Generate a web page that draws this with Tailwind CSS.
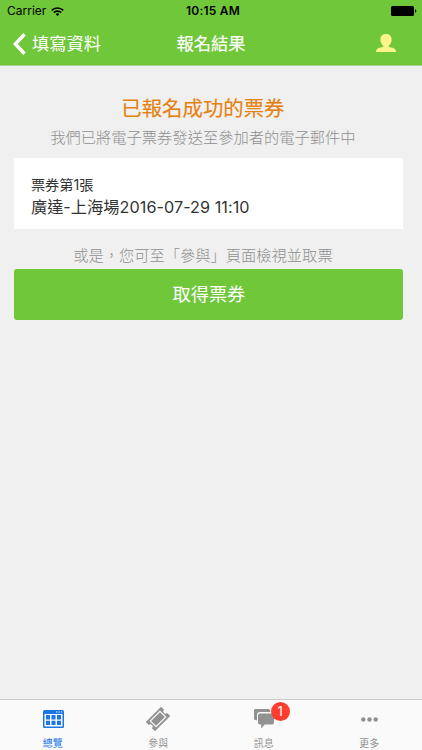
<!DOCTYPE html>
<html lang="zh-TW">
<head>
    <meta charset="UTF-8">
    <meta name="viewport" content="width=device-width, initial-scale=1.0">
    <title>報名結果</title>
    <script src="https://cdn.jsdelivr.net/npm/@tailwindcss/browser@4"></script>
    <style>
        body { font-family: 'Inter', 'Noto Sans CJK TC', sans-serif; }
    </style>
</head>
<body class="bg-[#f0f0f0]">

    <div class="flex h-[750px] w-[422px] flex-col overflow-hidden">
        <header class="h-[66px] border-b border-[#a9cf92] bg-[#71c73a]">
            <!-- Status bar -->
            <div class="grid h-[22px] grid-cols-3 items-center pl-[7px] pr-[5px] text-black">
                <div class="flex items-center gap-[5px]">
                    <span class="text-[12px] leading-[22px]">Carrier</span>
                    <svg class="h-[9px] w-[13px]" viewBox="0 0 13 9" fill="none" stroke="#000" stroke-width="1.7">
                        <path d="M.7 3.4a8.2 8.2 0 0 1 11.6 0M2.8 5.6a5.2 5.2 0 0 1 7.4 0"/>
                        <path d="M4.6 7.1a2.7 2.7 0 0 1 3.8 0L6.5 9z" fill="#000" stroke="none"/>
                    </svg>
                </div>
                <span class="pl-[2px] text-center text-[12px] font-semibold leading-[22px] tracking-[0.2px]">10:15 AM</span>
                <svg class="h-[10px] w-[26px] justify-self-end" viewBox="0 0 26 10">
                    <rect width="23" height="10" rx="1.5"/>
                    <path d="M24 3.2c1.8.3 1.8 3.3 0 3.6z"/>
                </svg>
            </div>
            <!-- Navigation -->
            <div class="grid h-[43px] grid-cols-3 items-center pl-[13px] pr-[26px]">
                <div class="flex items-center gap-[6px] text-white">
                    <svg class="h-[22px] w-[13px]" viewBox="0 0 13 22" fill="none" stroke="#fff" stroke-width="3.5">
                        <path d="M11.5 1.3 2.4 11l9.1 9.7"/>
                    </svg>
                    <span class="whitespace-nowrap text-[17.3px] leading-[26px]">填寫資料</span>
                </div>
                <h1 class="pl-[13px] text-center text-[17.3px] leading-[26px] text-white [-webkit-text-stroke:0.15px_#fff]">報名結果</h1>
                <svg class="mb-[2px] h-[18px] w-[20px] justify-self-end" viewBox="0 0 20 18" fill="#fdf58c">
                    <path d="M10 0C6.7 0 4.4 2 4.4 5.4c0 2.8 1.2 4.800 2.800 6v1.400c-.8.7-4.500.9-6.100 2.100C.2 15.700 0 16.800 0 18h20c0-1.200-.2-2.300-1.100-3.100-1.600-1.200-5.300-1.400-6.100-2.100v-1.400c1.600-1.200 2.800-3.200 2.800-6C15.600 2 13.300 0 10 0z"/>
                </svg>
            </div>
        </header>

        <main class="flex-1 pl-[14.4px] pr-[18.6px] pt-[28px]">
            <div class="-ml-[14px] -mr-[2px]">
                <h2 class="text-center text-[20.4px] leading-[30px] text-[#e5810f] [-webkit-text-stroke:0.15px_#e5810f]">已報名成功的票券</h2>
                <p class="text-center text-[15.27px] font-light leading-[27px] text-[#8f8f8f]">我們已將電子票券發送至參加者的電子郵件中</p>
            </div>

            <div class="mt-[7px] h-[71px] bg-white px-[16.5px] pt-[16px] text-[#333]">
                <p class="text-[14.2px] leading-[22px]">票券第1張</p>
                <p class="text-[16.2px] leading-[23px] tracking-[0.05px]">廣達-上海場2016-07-29 11:10</p>
            </div>

            <div class="-ml-[14px] -mr-[2px] mt-[14px]">
                <p class="text-center text-[15.27px] font-light leading-[26px] text-[#8f8f8f]">或是，您可至「參與」頁面檢視並取票</p>
            </div>
            <button class="block h-[51px] w-full rounded-[3px] bg-[#71c73a] text-[18.2px] text-white">取得票券</button>
        </main>

        <nav class="grid h-[51px] grid-cols-4 border-t border-[#c9c9c9] bg-[#fafafa] text-[10px] text-[#929292]">
            <div class="flex flex-col items-center pt-[10px] text-[#1b76e5]">
                <svg class="ml-[2px] h-[18px] w-[21px]" viewBox="0 0 21 18">
                    <rect width="21" height="18" rx="1.5" fill="#1b76e5"/>
                    <path d="M1.5 4h18v12.500h-18z" fill="#fafafa"/>
                    <path d="M3 5h4v4.500H3zM8.500 5h4v4.500h-4zM14 5h4v4.500h-4zM3 10.800h4v4.200H3zM8.500 10.800h4v4.200h-4zM14 10.800h4v4.200h-4z" fill="#1b76e5"/>
                    <path d="M13 1.400h1.300v1.200H13zM15.500 1.400h1.300v1.200h-1.300zM18 1.400h1.300v1.200H18z" fill="#fff"/>
                </svg>
                <span class="mt-[8px] leading-[14px]">總覽</span>
            </div>
            <div class="flex flex-col items-center pt-[7px]">
                <svg class="h-[24px] w-[24px]" viewBox="0 0 24 24">
                    <g transform="rotate(-45 12 12)">
                        <path d="M1.2 5.500h21.600v4.300a2.200 2.200 0 0 0 0 4.400v4.300H1.200v-4.300a2.200 2.200 0 0 0 0-4.400z" fill="#929292"/>
                        <path d="M5.200 7.900h13.600v8.200H5.200z" fill="none" stroke="#fafafa" stroke-width="1.200"/>
                    </g>
                </svg>
                <span class="mt-[5px] leading-[14px]">參與</span>
            </div>
            <div class="flex flex-col items-center pt-[9px]">
                <div class="relative">
                    <svg class="h-[20px] w-[20px]" viewBox="0 0 20 20" fill="#929292">
                        <path d="M1.600 0h12.800c.9 0 1.600.7 1.600 1.600V3H6C4 3 3 4 3 6v5.500L1.500 11C.5 10.700 0 10.200 0 9.400V1.600C0 .7.700 0 1.600 0z"/>
                        <path d="M6 4.500h12c1.200 0 2 .8 2 2v7c0 1.200-.8 2-2 2h-7.300L7.200 19.500v-4H6c-1.200 0-2-.8-2-2v-7c0-1.200.8-2 2-2z"/>
                    </svg>
                    <span class="absolute -top-[7px] left-[17px] flex h-[19px] w-[19px] items-center justify-center rounded-full bg-[#fc3d30] text-[13px] leading-none text-white">1</span>
                </div>
                <span class="mt-[7px] leading-[14px]">訊息</span>
            </div>
            <div class="flex flex-col items-center pt-[17px]">
                <svg class="h-[5px] w-[17px]" viewBox="0 0 17 5" fill="#929292">
                    <circle cx="2.300" cy="2.500" r="2.200"/>
                    <circle cx="8.500" cy="2.500" r="2.200"/>
                    <circle cx="14.700" cy="2.500" r="2.200"/>
                </svg>
                <span class="mt-[14px] leading-[14px]">更多</span>
            </div>
        </nav>
    </div>

</body>
</html>
